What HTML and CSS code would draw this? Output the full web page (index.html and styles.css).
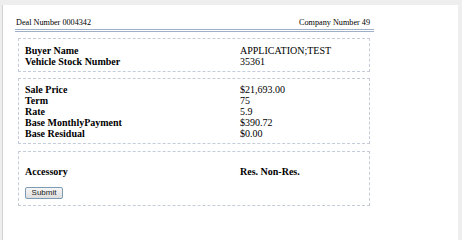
FILE: index.html
```html
<!DOCTYPE html>
<html>
<head>
<meta charset="utf-8">
<link rel="stylesheet" href="styles.css">
</head>
<body>
<div class="page">
  <div class="sheet">
    <div class="header">
      <span>Deal Number 0004342</span>
      <span>Company Number 49</span>
    </div>
    <div class="box box-buyer">
      <div class="grid">
        <div class="label">Buyer Name</div><div class="value">APPLICATION;TEST</div>
        <div class="label">Vehicle Stock Number</div><div class="value">35361</div>
      </div>
    </div>
    <div class="box box-deal">
      <div class="grid">
        <div class="label">Sale Price</div><div class="value">$21,693.00</div>
        <div class="label">Term</div><div class="value">75</div>
        <div class="label">Rate</div><div class="value">5.9</div>
        <div class="label">Base MonthlyPayment</div><div class="value">$390.72</div>
        <div class="label">Base Residual</div><div class="value">$0.00</div>
      </div>
    </div>
    <div class="box box-acc">
      <div class="grid">
        <div class="label">Accessory</div><div class="label">Res. Non-Res.</div>
      </div>
      <button class="submit" type="button">Submit</button>
    </div>
  </div>
</div>
</body>
</html>
```
FILE: styles.css
```css
html, body {
  margin: 0;
  padding: 0;
  background: #eeeeee;
}
.page {
  margin: 5px 4px 0 2px;
  border-left: 1px solid #d2d2d2;
  background: #ffffff;
  min-height: calc(100vh - 5px);
  overflow: hidden;
}
.sheet {
  width: 359px;
  margin-left: 12px;
  font-family: "Liberation Serif", "Times New Roman", serif;
  color: #000;
}
.header {
  display: flex;
  justify-content: space-between;
  font-size: 8.2px;
  line-height: 10px;
  padding: 13px 4px 1px 1px;
  border-bottom: 3px double #9eafc6;
}
.box {
  margin: 6px 4px 0 3px;
  border: 1px dashed #c3ccd8;
  padding: 6px 6px 4px 6px;
  font-size: 10px;
  line-height: 11px;
}
.box-deal {
  padding-top: 5px;
}
.box-acc {
  margin-top: 7px;
  padding-top: 14px;
  padding-bottom: 6px;
}
.grid {
  display: grid;
  grid-template-columns: 215px 1fr;
}
.label {
  font-weight: bold;
}
.submit {
  display: block;
  margin: 10px 0 0 0;
  height: 12px;
  width: 38px;
  padding: 0;
  font-family: "Liberation Sans", Arial, sans-serif;
  font-size: 8px;
  line-height: 10px;
  color: #1a1a1a;
  background: linear-gradient(#f6f6f6, #dedede);
  border: 1px solid #7d9cb3;
  border-radius: 2px;
}
```
